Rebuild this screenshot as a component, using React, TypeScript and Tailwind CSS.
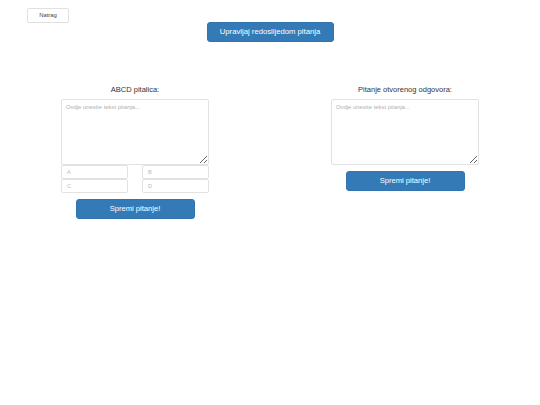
import React from "react";

const font = { fontFamily: '"Liberation Sans", Arial, sans-serif' };

function SaveButton() {
  return (
    <button
      type="button"
      className="mt-[6px] h-[20px] w-[119px] rounded-[3px] border border-[#3174ae] bg-[#337ab7] text-[7.6px] leading-none text-white"
    >
      Spremi pitanje!
    </button>
  );
}

function QuestionBox() {
  return (
    <textarea
      placeholder="Ovdje unesite tekst pitanja..."
      className="block h-[66px] w-[148px] resize rounded-[2px] border border-[#e2e2e2] bg-white px-[4px] py-[3px] text-[5.9px] leading-[8px] text-[#333] outline-none placeholder:text-[#b0b0b0]"
    />
  );
}

function AnswerInput({ label }: { label: string }) {
  return (
    <input
      placeholder={label}
      className="block h-[14px] w-full rounded-[2px] border border-[#e2e2e2] bg-white px-[5px] text-[5.6px] text-[#333] outline-none placeholder:text-[#b8b8b8]"
    />
  );
}

export default function App() {
  return (
    <div className="min-h-[405px] w-[540px] bg-white text-[#333]" style={font}>
      <div className="flex pl-[27px] pt-[8px]">
        <button
          type="button"
          className="h-[15px] w-[42px] rounded-[2px] border border-[#e0e0e0] bg-white text-[5.9px] leading-none text-[#444]"
        >
          Natrag
        </button>
      </div>

      <div className="mt-[-1px] flex justify-center">
        <button
          type="button"
          className="h-[20px] w-[127px] rounded-[3px] border border-[#3174ae] bg-[#337ab7] text-[7.7px] leading-none text-white"
        >
          Upravljaj redoslijedom pitanja
        </button>
      </div>

      <div className="mt-[43px] grid grid-cols-2">
        <div className="flex flex-col items-center">
          <div className="mb-[4px] h-[10px] text-[7.5px] leading-[10px] text-[#333]">ABCD pitalica:</div>
          <QuestionBox />
          <div className="grid w-[148px] grid-cols-2 gap-x-[14px]">
            <AnswerInput label="A" />
            <AnswerInput label="B" />
            <AnswerInput label="C" />
            <AnswerInput label="D" />
          </div>
          <SaveButton />
        </div>

        <div className="flex flex-col items-center">
          <div className="mb-[4px] h-[10px] text-[7.5px] leading-[10px] text-[#333]">Pitanje otvorenog odgovora:</div>
          <QuestionBox />
          <SaveButton />
        </div>
      </div>
    </div>
  );
}
